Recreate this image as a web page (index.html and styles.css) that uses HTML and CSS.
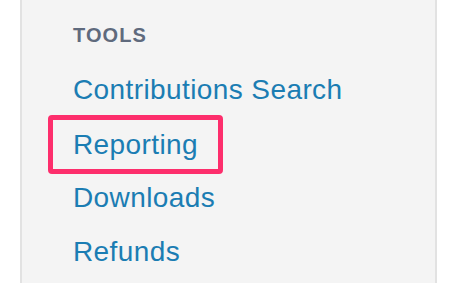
FILE: index.html
```html
<!DOCTYPE html>
<html>
<head>
<meta charset="utf-8">
<link rel="stylesheet" href="styles.css">
</head>
<body>
<nav class="panel">
  <h3 class="heading">TOOLS</h3>
  <ul class="links">
    <li class="item"><a class="link" href="#">Contributions Search</a></li>
    <li class="item"><a class="link highlight" href="#">Reporting</a></li>
    <li class="item"><a class="link" href="#">Downloads</a></li>
    <li class="item"><a class="link" href="#">Refunds</a></li>
  </ul>
</nav>
</body>
</html>
```
FILE: styles.css
```css
html, body {
  margin: 0;
  padding: 0;
  background: #ffffff;
}
body {
  width: 456px;
  height: 283px;
  overflow: hidden;
  font-family: "Liberation Sans", Arial, sans-serif;
}
.panel {
  box-sizing: border-box;
  margin-left: 20px;
  width: 417px;
  height: 283px;
  background: #f4f4f4;
  border-left: 2px solid #e2e2e2;
  border-right: 2px solid #e2e2e2;
  padding: 25px 0 0 51px;
}
.heading {
  margin: 0;
  font-size: 20px;
  line-height: 20px;
  font-weight: bold;
  letter-spacing: 1.1px;
  color: #5f6a7d;
}
.links {
  list-style: none;
  margin: 18px 0 0;
  padding: 0;
}
.item {
  display: flex;
  height: 54px;
  align-items: flex-start;
}
.link {
  font-size: 28px;
  line-height: 54px;
  letter-spacing: 0.4px;
  color: #1b7db3;
  text-decoration: none;
}
.highlight {
  line-height: 49px;
  border: 5px solid #fd2e6c;
  border-radius: 4px;
  padding: 0 20px;
  margin: -2px 0 -3px -25px;
}
```
